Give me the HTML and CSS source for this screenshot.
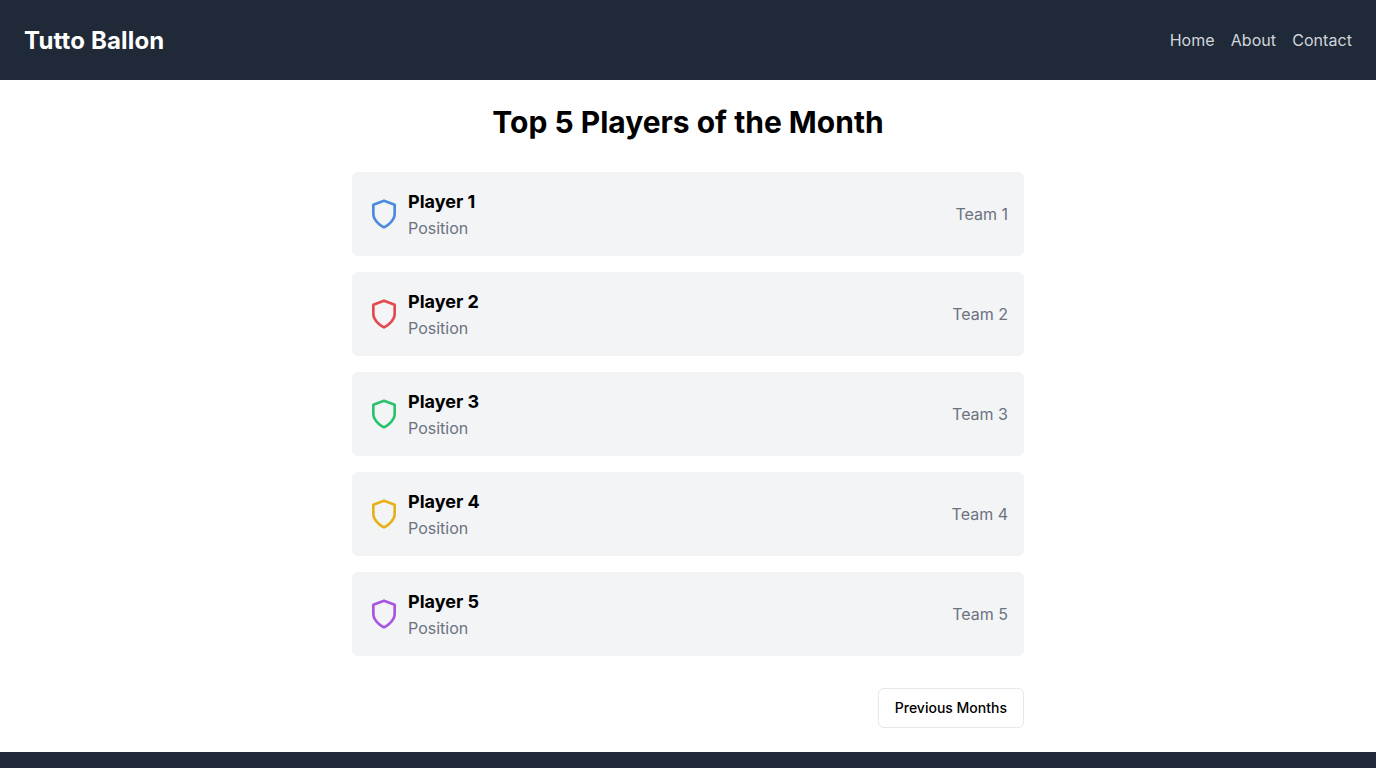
FILE: index.html
```html
<!DOCTYPE html>
<html lang="en">
<head>
<meta charset="utf-8">
<title>Tutto Ballon</title>
<link rel="stylesheet" href="styles.css">
</head>
<body>
<header class="topbar">
  <div class="brand">Tutto Ballon</div>
  <nav class="nav"><a href="#">Home</a><a href="#">About</a><a href="#">Contact</a></nav>
</header>
<main class="main">
  <h1 class="title">Top 5 Players of the Month</h1>
  <div class="list">
    <div class="card"><div class="left"><svg class="icon blue" viewBox="0 0 24 24"><path d="M12 22s8-4 8-10V5l-8-3-8 3v7c0 6 8 10 8 10z"/></svg><div><div class="name">Player 1</div><div class="pos">Position</div></div></div><div class="team">Team 1</div></div>
    <div class="card"><div class="left"><svg class="icon red" viewBox="0 0 24 24"><path d="M12 22s8-4 8-10V5l-8-3-8 3v7c0 6 8 10 8 10z"/></svg><div><div class="name">Player 2</div><div class="pos">Position</div></div></div><div class="team">Team 2</div></div>
    <div class="card"><div class="left"><svg class="icon green" viewBox="0 0 24 24"><path d="M12 22s8-4 8-10V5l-8-3-8 3v7c0 6 8 10 8 10z"/></svg><div><div class="name">Player 3</div><div class="pos">Position</div></div></div><div class="team">Team 3</div></div>
    <div class="card"><div class="left"><svg class="icon yellow" viewBox="0 0 24 24"><path d="M12 22s8-4 8-10V5l-8-3-8 3v7c0 6 8 10 8 10z"/></svg><div><div class="name">Player 4</div><div class="pos">Position</div></div></div><div class="team">Team 4</div></div>
    <div class="card"><div class="left"><svg class="icon purple" viewBox="0 0 24 24"><path d="M12 22s8-4 8-10V5l-8-3-8 3v7c0 6 8 10 8 10z"/></svg><div><div class="name">Player 5</div><div class="pos">Position</div></div></div><div class="team">Team 5</div></div>
  </div>
  <div class="actions"><button class="btn">Previous Months</button></div>
</main>
<footer class="footer"></footer>
</body>
</html>
```
FILE: styles.css
```css
* { box-sizing: border-box; }
html, body { margin: 0; padding: 0; }
body { font-family: Inter, sans-serif; background: #fff; color: #000; min-height: 768px; display: flex; flex-direction: column; }
.topbar { height: 80px; background: #1f2937; display: flex; align-items: center; justify-content: space-between; padding: 0 24px; flex-shrink: 0; }
.brand { color: #fff; font-size: 24px; line-height: 32px; font-weight: 700; letter-spacing: 0.15px; padding-top: 2px; }
.nav { display: flex; gap: 16px; }
.nav a { color: #d1d5db; font-size: 16px; line-height: 24px; text-decoration: none; letter-spacing: 0.06px; }
.main { flex: 1; width: 672px; margin: 0 auto; padding-top: 20px; }
.title { margin: 0 0 28px; font-size: 30px; line-height: 44px; font-weight: 700; text-align: center; }
.list { display: flex; flex-direction: column; gap: 16px; }
.card { height: 84px; background: #f3f4f6; border-radius: 6px; padding: 16px; display: flex; align-items: center; justify-content: space-between; }
.left { display: flex; align-items: center; gap: 8px; }
.icon { width: 32px; height: 32px; fill: none; stroke-width: 2; stroke-linecap: round; stroke-linejoin: round; }
.blue { stroke: #4a8adf; }
.red { stroke: #e5484d; }
.green { stroke: #2ac26a; }
.yellow { stroke: #e6b016; }
.purple { stroke: #a855e0; }
.name { font-size: 18px; line-height: 28px; font-weight: 700; }
.pos, .team { font-size: 16px; line-height: 24px; color: #6b7280; }
.actions { display: flex; justify-content: flex-end; margin-top: 32px; }
.btn { height: 40px; padding: 0 16px; background: #fff; border: 1px solid #e5e7eb; border-radius: 6px; font: 500 14px/20px Inter, sans-serif; color: #000; }
.footer { height: 16px; background: #1f2937; flex-shrink: 0; }
```
